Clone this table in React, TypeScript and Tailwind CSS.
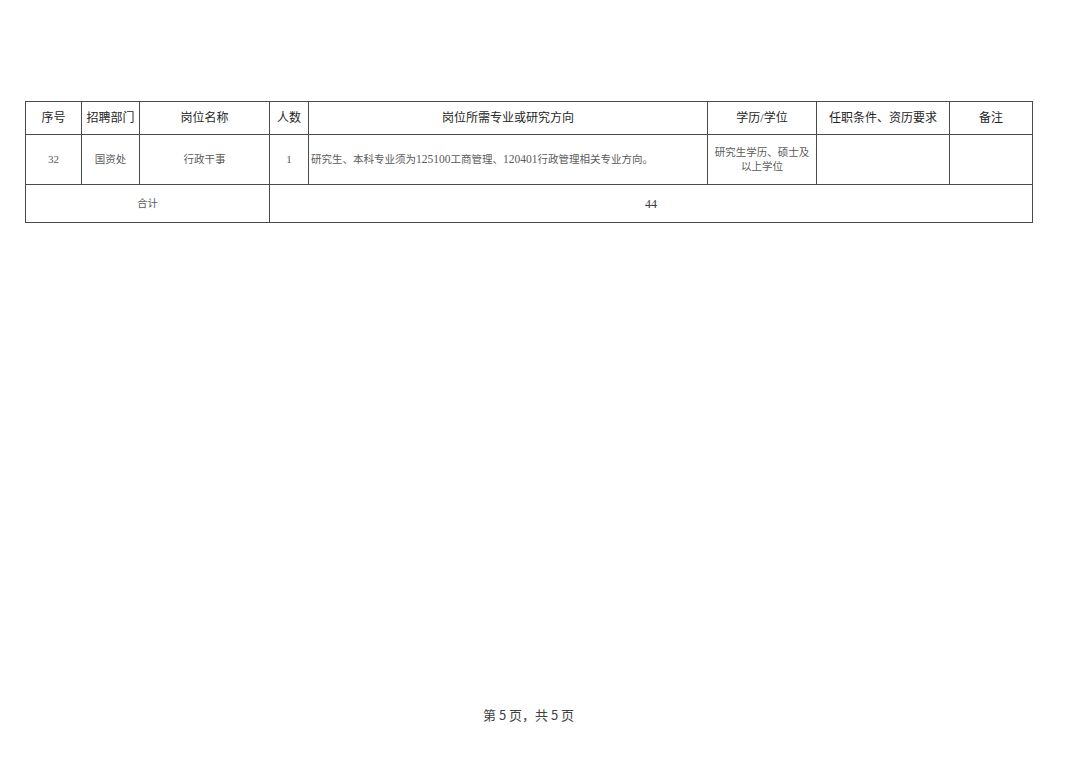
const font = "font-['Liberation_Serif','Noto_Sans_CJK_SC',serif]";

const cols = [56, 58, 130, 39, 399, 109, 133, 83];

const headers = ["序号", "招聘部门", "岗位名称", "人数", "岗位所需专业或研究方向", "学历/学位", "任职条件、资历要求", "备注"];

export default function App() {
  return (
    <div className={`w-[1080px] h-[763px] bg-white flex flex-col ${font}`}>
      <div className="pt-[101px] pl-[25px]">
        <table className="table-fixed border-collapse w-[1007px]">
          <colgroup>
            {cols.map((w, i) => (
              <col key={i} style={{ width: w }} />
            ))}
          </colgroup>
          <tbody>
            <tr className="h-[33px]">
              {headers.map((h) => (
                <th key={h} className="border border-[#4a4a4a] p-0 text-center align-middle text-[12px] font-normal text-[#262626] leading-none">
                  {h}
                </th>
              ))}
            </tr>
            <tr className="h-[50px] text-[10.5px] text-[#5a5a5a]">
              <td className="border border-[#4a4a4a] p-0 text-center align-middle text-[11px]">32</td>
              <td className="border border-[#4a4a4a] p-0 text-center align-middle">国资处</td>
              <td className="border border-[#4a4a4a] p-0 text-center align-middle">行政干事</td>
              <td className="border border-[#4a4a4a] p-0 text-center align-middle text-[11px]">1</td>
              <td className="border border-[#4a4a4a] py-0 pl-[2px] pr-0 text-left align-middle whitespace-nowrap">
                研究生、本科专业须为<span className="text-[11.5px]">125100</span>工商管理、<span className="text-[11.5px]">120401</span>行政管理相关专业方向。
              </td>
              <td className="border border-[#4a4a4a] px-[4px] py-0 text-center align-middle leading-[14px]">
                研究生学历、硕士及
                <br />
                以上学位
              </td>
              <td className="border border-[#4a4a4a] p-0"></td>
              <td className="border border-[#4a4a4a] p-0"></td>
            </tr>
            <tr className="h-[38px] text-[10.5px] text-[#5a5a5a]">
              <td colSpan={3} className="border border-[#4a4a4a] p-0 text-center align-middle">
                合计
              </td>
              <td colSpan={5} className="border border-[#4a4a4a] p-0 text-center align-middle text-[12px] text-[#3a3a3a]">
                44
              </td>
            </tr>
          </tbody>
        </table>
      </div>
      <div className="mt-auto pb-[42px] pl-[483px] text-[13px] text-[#3f3f3f] font-['Noto_Sans_CJK_SC',sans-serif] leading-none">
        第 5 页，共 5 页
      </div>
    </div>
  );
}
